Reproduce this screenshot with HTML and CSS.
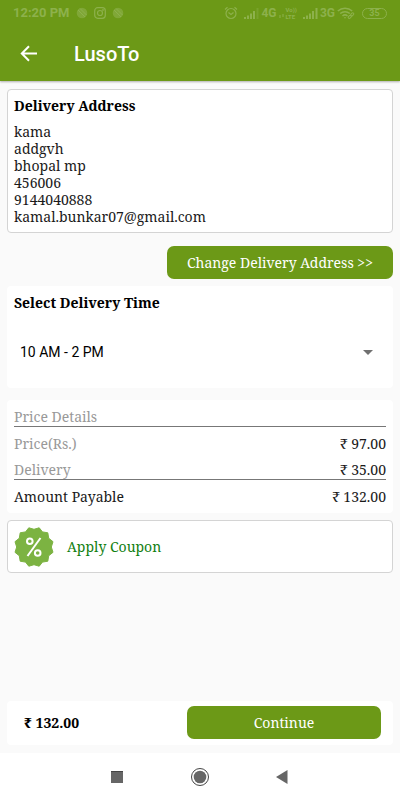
FILE: index.html
```html
<!DOCTYPE html>
<html lang="en">
<head>
<meta charset="utf-8">
<meta name="viewport" content="width=device-width, initial-scale=1">
<title>LusoTo</title>
<link rel="stylesheet" href="styles.css">
</head>
<body>
<header class="top">
  <div class="status">
    <div class="status-group">
      <span class="clock">12:20 PM</span>
      <svg width="12" height="12" viewBox="0 0 12 12"><circle cx="6" cy="6" r="5.3" fill="currentColor" opacity=".6"/><path d="M2 3l7 7M4 1.500l6.500 6.500" stroke="currentColor" fill="none"/></svg>
      <svg width="12" height="12" viewBox="0 0 12 12" fill="none" stroke="currentColor" stroke-width="1.200"><rect x=".7" y=".7" width="10.600" height="10.600" rx="3"/><circle cx="6" cy="6" r="2.500"/><circle cx="9" cy="3" r=".3"/></svg>
      <svg width="12" height="12" viewBox="0 0 12 12"><circle cx="6" cy="6" r="5.3" fill="currentColor" opacity=".6"/><path d="M2 3l7 7M4 1.500l6.500 6.500" stroke="currentColor" fill="none"/></svg>
    </div>
    <div class="status-group signals">
      <svg class="alarm" width="14" height="14" viewBox="0 0 14 14" fill="none" stroke="currentColor" stroke-width="1.200"><circle cx="7" cy="7.500" r="5"/><path d="M1 3.500l2.500-2.300M13 3.500l-2.500-2.300M4.500 6.500L7 8.500l2.500-2"/></svg>
      <svg width="15" height="11" viewBox="0 0 15 11" fill="currentColor"><path d="M0 9h2v2H0zM3 7.500h2V11H3zM6 5.500h2V11H6zM9 3h2v8H9z"/><path d="M12.500 0h2v11h-2z" opacity=".4"/></svg>
      <span class="net">4G</span>
      <svg class="data" width="5" height="11" viewBox="0 0 5 11" fill="currentColor" opacity=".5"><path d="M0 7h2v3H0zM3 6h2v3H3z"/></svg>
      <span class="volte"><span>Vo))</span><span>LTE</span></span>
      <svg width="15" height="11" viewBox="0 0 15 11" fill="currentColor"><path d="M0 9h2v2H0zM3 7.500h2V11H3zM6 5.500h2V11H6zM9 3h2v8H9zM12.500 0h2v11h-2z"/></svg>
      <span class="net">3G</span>
      <svg width="18" height="12" viewBox="0 0 18 12" fill="none" stroke="currentColor" stroke-width="1.500"><path d="M.8 4a10.800 10.800 0 0 1 14.400 0M3.200 6.500a7.200 7.200 0 0 1 9.600 0M5.500 9a3.700 3.700 0 0 1 5 0"/><path d="M6.800 10.200L8 11.700l1.200-1.500z" fill="currentColor" stroke="none"/><g stroke-width="1"><rect x="11" y="8.800" width="3.500" height="2.200" rx="1.100" transform="rotate(-45 12.700 9.900)"/><rect x="13.500" y="6.300" width="3.500" height="2.200" rx="1.100" transform="rotate(-45 15.200 7.400)"/></g></svg>
      <span class="battery">35</span>
    </div>
  </div>
  <div class="appbar">
    <button class="back" type="button" aria-label="Back">
      <svg width="18" height="18" viewBox="0 0 18 18" fill="none" stroke="currentColor" stroke-width="2"><path d="M17 8.500H2M9 1.300L1.800 8.500l7.200 7.200"/></svg>
    </button>
    <h1>LusoTo</h1>
  </div>
</header>

<main>
  <section class="card outlined address">
    <h2>Delivery Address</h2>
    <address>kama<br>addgvh<br>bhopal mp<br>456006<br>9144040888<br>kamal.bunkar07@gmail.com</address>
  </section>
  <button class="btn change" type="button">Change Delivery Address &gt;&gt;</button>
  <section class="card time">
    <h2><label for="slot">Select Delivery Time</label></h2>
    <div class="select">
      <select id="slot"><option>10 AM - 2 PM</option></select>
      <svg width="10" height="5" viewBox="0 0 10 5"><path d="M0 0h10L5 5z" fill="#707070"/></svg>
    </div>
  </section>
  <section class="card prices">
    <table>
      <thead><tr><th colspan="2">Price Details</th></tr></thead>
      <tbody>
        <tr><th scope="row">Price(Rs.)</th><td>₹ 97.00</td></tr>
        <tr><th scope="row">Delivery</th><td>₹ 35.00</td></tr>
      </tbody>
      <tfoot><tr><th scope="row">Amount Payable</th><td>₹ 132.00</td></tr></tfoot>
    </table>
  </section>
  <button class="card outlined coupon" type="button">
    <svg width="40" height="40" viewBox="0 0 40 40">
      <path fill="#7cb342" stroke="#7cb342" stroke-linejoin="round" d="M20 2.300L25.200 .8 28.500 4.900 33.800 5.800 34.700 11.200 39 14.700 37.300 20 39 25.300 34.700 28.800 33.800 34.200 28.500 35.100 25.200 39.200 20 37.700 14.800 39.200 11.500 35.100 6.200 34.200 5.300 28.800 1 25.300 2.700 20 1 14.700 5.300 11.200 6.200 5.800 11.500 4.900 14.800 .8z"/>
      <g fill="none" stroke="#fff" stroke-width="2"><circle cx="15.800" cy="14.200" r="2.800"/><circle cx="23.700" cy="26" r="2.800"/><path d="M26.500 11L13.500 29"/></g>
    </svg>
    <span>Apply Coupon</span>
  </button>
</main>

<footer class="card checkout">
  <strong>₹ 132.00</strong>
  <button class="btn" type="button">Continue</button>
</footer>

<nav class="sysnav" aria-label="System">
  <button type="button" aria-label="Recent apps"><svg width="20" height="20" viewBox="0 0 20 20"><path d="M4 4h12v12H4z" fill="#666"/><path d="M4 4.500h12" stroke="#444"/></svg></button>
  <button type="button" aria-label="Home"><svg width="20" height="20" viewBox="0 0 20 20"><circle cx="10" cy="10" r="8.500" fill="none" stroke="#444"/><circle cx="10" cy="10" r="6.300" fill="#666"/></svg></button>
  <button type="button" aria-label="Back"><svg width="20" height="20" viewBox="0 0 20 20"><path d="M14.500 3v14L3 10z" fill="#666"/></svg></button>
</nav>
</body>
</html>
```
FILE: styles.css
```css
* { box-sizing: border-box; }

body {
  margin: 0;
  min-height: 100vh;
  display: flex;
  flex-direction: column;
  background: #fafafa;
  color: #1a1a1a;
  font: 14px/18px "Noto Serif", "Droid Serif", "DejaVu Serif", serif;
}

button, select {
  border: 0;
  padding: 0;
  background: none;
  color: inherit;
  font: inherit;
}

h1, h2 { margin: 0; }
h2 { font-size: 14px; color: #000; }
svg { display: block; flex: none; }

.top {
  background: #6c9917;
  color: #fff;
  font-family: Roboto, sans-serif;
  box-shadow: 0 1px 2px rgba(0, 0, 0, .3);
}

.status {
  height: 26px;
  padding: 0 13px;
  display: flex;
  align-items: center;
  justify-content: space-between;
  color: #8db14c;
}
.status-group { display: flex; align-items: center; gap: 6px; }
.signals { gap: 2px; }
.clock { font-size: 13px; font-weight: 700; }
.net { font-size: 12px; font-weight: 700; }
.alarm { margin-right: 4px; }
.volte {
  display: flex;
  flex-direction: column;
  margin-right: 4px;
  font-size: 6px;
  line-height: 7px;
  font-weight: 700;
}
.battery {
  width: 25px;
  height: 11px;
  margin-left: 5px;
  border: 1px solid;
  border-radius: 6px;
  font-size: 9px;
  line-height: 9px;
  font-weight: 700;
  text-align: center;
}

.appbar {
  height: 55px;
  padding-left: 20px;
  display: flex;
  align-items: center;
  gap: 36px;
}
.appbar h1 { font-size: 20px; line-height: 24px; font-weight: 500; }

main {
  display: flex;
  flex-direction: column;
  padding: 8px 7px;
}

.card { background: #fff; border-radius: 4px; }
.outlined { border: 1px solid #d4d4d4; }

.address { padding: 7px 6px; }
address { margin-top: 8px; line-height: 17px; font-style: normal; }

.btn {
  height: 33px;
  border-radius: 7px;
  background: #6c9917;
  color: #fff;
}
.change { align-self: flex-end; margin: 13px 0 7px; padding: 0 20px; }

.time { padding: 8px 7px 12px; }
.select { display: grid; align-items: center; margin-top: 16px; }
.select > * { grid-area: 1 / 1; }
.select select {
  width: 100%;
  height: 48px;
  padding: 0 6px;
  appearance: none;
  color: #000;
  font: 14px/18px Roboto, sans-serif;
}
.select svg { justify-self: end; margin-right: 13px; pointer-events: none; }

.prices { margin: 12px 0 7px; padding: 0 7px 7px; }
table { width: 100%; border-collapse: separate; border-spacing: 0; }
th, td { padding: 8px 0 0; font-weight: 400; }
th { text-align: left; color: #999; }
td { text-align: right; }
tfoot th { color: #1a1a1a; }
thead th, tbody tr:last-child > * { border-bottom: 1px solid #777; }

.outlined.coupon {
  height: 53px;
  padding: 0 6px;
  display: flex;
  align-items: center;
  gap: 13px;
  color: #118011;
}

.checkout {
  margin: auto 7px 8px;
  padding: 5px 12px 6px 17px;
  display: grid;
  grid-template-columns: 163px 1fr;
  align-items: center;
}
.checkout strong { color: #000; }

.sysnav {
  height: 47px;
  display: flex;
  align-items: center;
  justify-content: center;
  gap: 63px;
  background: #fff;
}
```
